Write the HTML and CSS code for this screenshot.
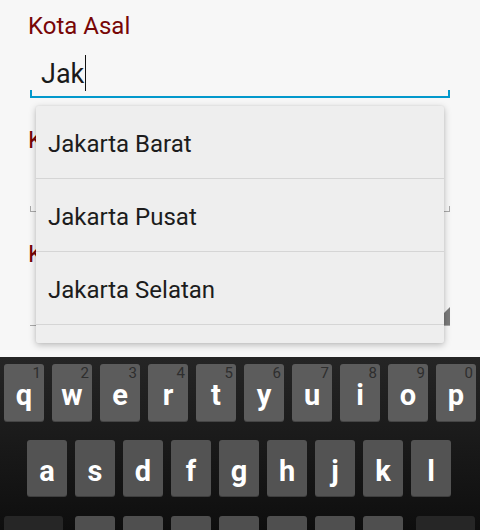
FILE: index.html
```html
<!DOCTYPE html>
<html lang="id">
<head>
<meta charset="utf-8">
<title>Kota Asal</title>
<link rel="stylesheet" href="styles.css">
</head>
<body>
<div class="screen">
  <div class="form">
    <div class="row">
      <div class="label">Kota Asal</div>
      <div class="field focused"><span class="value">Jak</span><span class="caret"></span></div>
    </div>
    <div class="row">
      <div class="label">Kota Tujuan</div>
      <div class="field"></div>
    </div>
    <div class="row">
      <div class="label">Kelas</div>
      <div class="field spinner"><span class="arrow"></span></div>
    </div>
  </div>

  <ul class="dropdown">
    <li>Jakarta Barat</li>
    <li>Jakarta Pusat</li>
    <li>Jakarta Selatan</li>
    <li></li>
  </ul>

  <div class="keyboard">
    <div class="krow r1">
      <div class="key"><span class="hint">1</span>q</div>
      <div class="key"><span class="hint">2</span>w</div>
      <div class="key"><span class="hint">3</span>e</div>
      <div class="key"><span class="hint">4</span>r</div>
      <div class="key"><span class="hint">5</span>t</div>
      <div class="key"><span class="hint">6</span>y</div>
      <div class="key"><span class="hint">7</span>u</div>
      <div class="key"><span class="hint">8</span>i</div>
      <div class="key"><span class="hint">9</span>o</div>
      <div class="key"><span class="hint">0</span>p</div>
    </div>
    <div class="krow r2">
      <div class="key">a</div>
      <div class="key">s</div>
      <div class="key">d</div>
      <div class="key">f</div>
      <div class="key">g</div>
      <div class="key">h</div>
      <div class="key">j</div>
      <div class="key">k</div>
      <div class="key">l</div>
    </div>
    <div class="krow r3">
      <div class="key dark wide shift"></div>
      <div class="key"></div>
      <div class="key"></div>
      <div class="key"></div>
      <div class="key"></div>
      <div class="key"></div>
      <div class="key"></div>
      <div class="key"></div>
      <div class="key dark wide del"></div>
    </div>
  </div>
</div>
</body>
</html>
```

FILE: styles.css
```css
* { box-sizing: border-box; }

html, body {
  margin: 0;
  padding: 0;
  background: #f7f7f7;
  font-family: Roboto, "Noto Sans", sans-serif;
}

.screen {
  position: relative;
  width: 480px;
  height: 530px;
  overflow: hidden;
}

/* ---------- form ---------- */
.form {
  height: 357px;
  padding: 12px 30px 0 28px;
  display: flex;
  flex-direction: column;
  gap: 28px;
}

.row {
  display: flex;
  flex-direction: column;
}

.label {
  height: 28px;
  font-size: 24px;
  line-height: 28px;
  color: #780606;
  white-space: nowrap;
}

.field {
  position: relative;
  height: 58px;
  margin-left: 2px;
  padding: 18px 0 0 11px;
  border-bottom: 1px solid #a9a9a9;
  font-size: 27px;
  line-height: 32px;
  color: #1a1a1a;
}

.field::before,
.field::after {
  content: "";
  position: absolute;
  bottom: 0;
  width: 1px;
  height: 5px;
  background: #a9a9a9;
}
.field::before { left: 0; }
.field::after { right: 0; }

.field.focused {
  border-bottom: 2px solid #0399cc;
}
.field.focused::before,
.field.focused::after {
  width: 2px;
  height: 6px;
  background: #0399cc;
}

.caret {
  display: inline-block;
  width: 1px;
  height: 36px;
  margin: -4px 0 -4px 1px;
  background: #111;
  vertical-align: -4px;
}

.spinner::before,
.spinner::after { display: none; }

.arrow {
  position: absolute;
  right: 0;
  bottom: 0;
  width: 0;
  height: 0;
  border-style: solid;
  border-width: 0 0 18px 18px;
  border-color: transparent transparent #7a7a7a transparent;
}

/* ---------- dropdown ---------- */
.dropdown {
  position: absolute;
  top: 106px;
  left: 36px;
  width: 408px;
  height: 237px;
  margin: 0;
  padding: 0;
  list-style: none;
  background: #eeeeee;
  border-radius: 2px;
  overflow: hidden;
  box-shadow: 0 2px 7px rgba(0, 0, 0, 0.25), 0 0 2px rgba(0, 0, 0, 0.08);
}

.dropdown li {
  height: 73px;
  padding: 3px 0 0 12px;
  border-bottom: 1px solid #d5d5d5;
  display: flex;
  align-items: center;
  font-size: 24px;
  color: #1c1c1c;
}

/* ---------- keyboard ---------- */
.keyboard {
  height: 173px;
  padding-top: 7px;
  background: linear-gradient(#252525, #0e0e0e);
  overflow: hidden;
}

.krow {
  display: flex;
  gap: 8px;
}

.r1 { padding-left: 4px; height: 58px; }
.r2 { padding-left: 27px; height: 57px; margin-top: 18px; }
.r3 { padding-left: 4px; height: 58px; margin-top: 19px; }

.key {
  position: relative;
  width: 40px;
  height: 100%;
  border-radius: 3px;
  background: #5c5c5c;
  box-shadow: inset 0 -1px 0 rgba(0, 0, 0, 0.25);
  color: #fff;
  font-weight: bold;
  font-size: 29px;
  line-height: 54px;
  padding-top: 4px;
  text-align: center;
}

.r2 .key { background: #535353; }
.r3 .key { background: #4f4f4f; }

.r3 .key.dark {
  background: #262626;
}
.r3 .key.wide { width: 59px; }
.r3 .shift { margin-right: 4px; }
.r3 .del { margin-left: 5px; }

.hint {
  position: absolute;
  top: 2px;
  right: 3px;
  font-size: 15px;
  line-height: 15px;
  font-weight: normal;
  color: #2e2e2e;
}
```
